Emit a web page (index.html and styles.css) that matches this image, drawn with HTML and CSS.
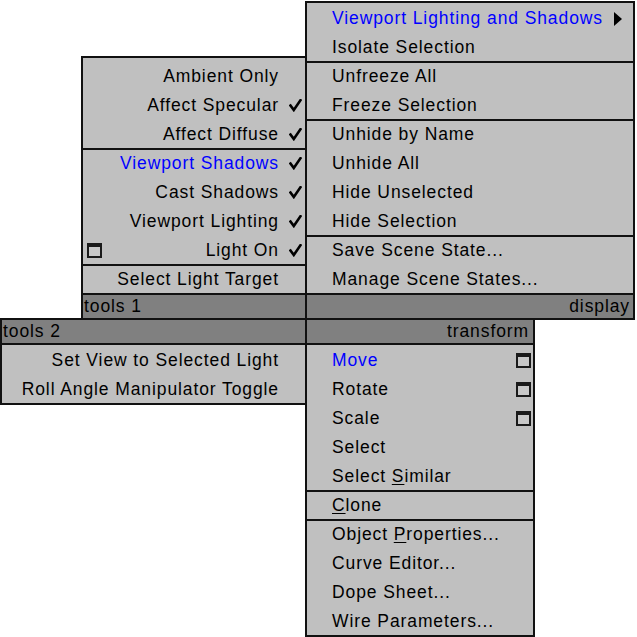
FILE: index.html
```html
<!DOCTYPE html>
<html>
<head>
<meta charset="utf-8">
<link rel="stylesheet" href="styles.css">
</head>
<body>
<div class="quad">
  <div class="panel tl">
    <div class="items">
      <div class="row rrow"><span>Ambient Only</span><span class="chk"></span></div>
      <div class="row rrow"><span>Affect Specular</span><span class="chk"><svg viewBox="0 0 13 13" width="13" height="13"><polyline points="1.5,6.5 4.8,11 11.5,1.2" /></svg></span></div>
      <div class="row rrow"><span>Affect Diffuse</span><span class="chk"><svg viewBox="0 0 13 13" width="13" height="13"><polyline points="1.5,6.5 4.8,11 11.5,1.2" /></svg></span></div>
      <div class="row rrow sep"><span class="hi">Viewport Shadows</span><span class="chk"><svg viewBox="0 0 13 13" width="13" height="13"><polyline points="1.5,6.5 4.8,11 11.5,1.2" /></svg></span></div>
      <div class="row rrow"><span>Cast Shadows</span><span class="chk"><svg viewBox="0 0 13 13" width="13" height="13"><polyline points="1.5,6.5 4.8,11 11.5,1.2" /></svg></span></div>
      <div class="row rrow"><span>Viewport Lighting</span><span class="chk"><svg viewBox="0 0 13 13" width="13" height="13"><polyline points="1.5,6.5 4.8,11 11.5,1.2" /></svg></span></div>
      <div class="row rrow"><span class="win win-left"></span><span>Light On</span><span class="chk"><svg viewBox="0 0 13 13" width="13" height="13"><polyline points="1.5,6.5 4.8,11 11.5,1.2" /></svg></span></div>
      <div class="row rrow sep"><span>Select Light Target</span><span class="chk"></span></div>
    </div>
    <div class="hdr hdr-top hdr-left">tools 1</div>
  </div>

  <div class="panel tr">
    <div class="items">
      <div class="row lrow"><span class="hi">Viewport Lighting and Shadows</span><svg class="arrow" viewBox="0 0 8 14" width="8" height="14"><polygon points="0,0 8,7 0,14" /></svg></div>
      <div class="row lrow"><span>Isolate Selection</span></div>
      <div class="row lrow sep"><span>Unfreeze All</span></div>
      <div class="row lrow"><span>Freeze Selection</span></div>
      <div class="row lrow sep"><span>Unhide by Name</span></div>
      <div class="row lrow"><span>Unhide All</span></div>
      <div class="row lrow"><span>Hide Unselected</span></div>
      <div class="row lrow"><span>Hide Selection</span></div>
      <div class="row lrow sep"><span>Save Scene State...</span></div>
      <div class="row lrow"><span>Manage Scene States...</span></div>
    </div>
    <div class="hdr hdr-top hdr-right">display</div>
  </div>

  <div class="panel bl">
    <div class="hdr hdr-bottom hdr-left">tools 2</div>
    <div class="items">
      <div class="row rrow2"><span>Set View to Selected Light</span></div>
      <div class="row rrow2"><span>Roll Angle Manipulator Toggle</span></div>
    </div>
  </div>

  <div class="panel br">
    <div class="hdr hdr-bottom hdr-right hdr-tr">transform</div>
    <div class="items">
      <div class="row lrow"><span class="hi">Move</span><span class="win win-right"></span></div>
      <div class="row lrow"><span>Rotate</span><span class="win win-right"></span></div>
      <div class="row lrow"><span>Scale</span><span class="win win-right"></span></div>
      <div class="row lrow"><span>Select</span></div>
      <div class="row lrow"><span>Select <u>S</u>imilar</span></div>
      <div class="row lrow sep"><span><u>C</u>lone</span></div>
      <div class="row lrow sep"><span>Object <u>P</u>roperties...</span></div>
      <div class="row lrow"><span>Curve Editor...</span></div>
      <div class="row lrow"><span>Dope Sheet...</span></div>
      <div class="row lrow"><span>Wire Parameters...</span></div>
    </div>
  </div>
</div>
</body>
</html>
```

FILE: styles.css
```css
html, body {
  margin: 0;
  padding: 0;
  background: #ffffff;
}

body {
  width: 637px;
  height: 637px;
  overflow: hidden;
  font-family: "Liberation Sans", Arial, sans-serif;
  font-size: 17.5px;
  letter-spacing: 0.9px;
  color: #000;
}

.quad {
  display: grid;
  grid-template-columns: 307px auto;
  grid-template-rows: 320px auto;
}

.panel {
  box-sizing: border-box;
  border: 2px solid #111;
  background: #c0c0c0;
  display: flex;
  flex-direction: column;
}

.tl {
  justify-self: end;
  align-self: end;
  width: 226px;
}

.tl .items {
  padding-top: 3px;
}

.tr {
  justify-self: start;
  align-self: end;
  width: 330px;
  margin-left: -2px;
}

.bl {
  justify-self: end;
  align-self: start;
  width: 307px;
  margin-top: -2px;
}

.br {
  justify-self: start;
  align-self: start;
  width: 230px;
  margin-left: -2px;
  margin-top: -2px;
}

.row {
  box-sizing: border-box;
  height: 29px;
  padding-top: 2px;
  line-height: 27px;
  display: flex;
  align-items: center;
  white-space: nowrap;
}

.row.sep {
  padding-top: 0;
  border-top: 2px solid #111;
}

.rrow {
  justify-content: flex-end;
}

.rrow2 {
  justify-content: flex-end;
  padding-right: 26px;
}

.lrow {
  padding-left: 25px;
}

.hi {
  color: #0000ff;
}

.chk {
  box-sizing: border-box;
  width: 26px;
  height: 13px;
  padding-left: 10px;
  display: flex;
  align-items: center;
}

.chk svg {
  display: block;
}

.chk polyline {
  fill: none;
  stroke: #000;
  stroke-width: 2.6;
  stroke-linecap: square;
  stroke-linejoin: miter;
}

.arrow {
  display: block;
  margin-left: auto;
  margin-right: 11px;
}

.arrow polygon {
  fill: #000;
}

.win {
  box-sizing: border-box;
  width: 15px;
  height: 15px;
  border: 2px solid #1a1a1a;
  border-top-width: 4px;
  background: #c8c8c8;
  flex: none;
}

.win-left {
  margin-left: 4px;
  margin-right: auto;
}

.win-right {
  margin-left: auto;
  margin-right: 2px;
}

u {
  text-decoration: underline;
  text-underline-offset: 2px;
}

.hdr {
  height: 23px;
  line-height: 23px;
  background: #808080;
  color: #000;
  white-space: nowrap;
}

.hdr-top {
  border-top: 2px solid #111;
}

.hdr-bottom {
  border-bottom: 2px solid #111;
}

.hdr-left {
  padding-left: 1px;
}

.hdr-right {
  text-align: right;
  padding-right: 3px;
}

.hdr-tr {
  padding-right: 4px;
}
```
